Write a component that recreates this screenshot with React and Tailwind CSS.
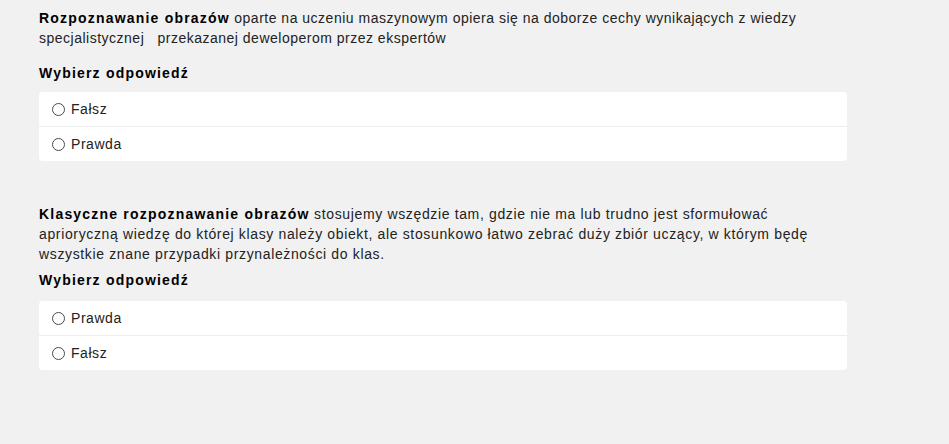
import React from "react";

function Radio() {
  return <span className="inline-block w-[13px] h-[13px] rounded-full border border-[#4a4a4a] bg-white shrink-0" />;
}

function Options({ items }) {
  return (
    <div className="w-[808px] bg-white rounded-[4px] flex flex-col">
      {items.map((t, i) => (
        <div
          key={t}
          className={
            "flex items-center gap-[6px] pl-[13px] " +
            (i > 0 ? "border-t border-[#eeeeee] h-[35px]" : "h-[34px]")
          }
        >
          <Radio />
          <span className="text-[#222] tracking-[0.55px]">{t}</span>
        </div>
      ))}
    </div>
  );
}

export default function App() {
  return (
    <div
      className="w-[949px] h-[444px] bg-[#f1f1f1] pl-[39px] pt-[8px] text-[14px] leading-[20px] text-[#222]"
      style={{ fontFamily: '"Liberation Sans", Arial, sans-serif' }}
    >
      <div className="w-[808px]">
        <p className="tracking-[0.5px]">
          <b className="text-black tracking-[1.2px]">Rozpoznawanie obrazów</b> oparte na uczeniu maszynowym opiera się na doborze cechy wynikających z wiedzy specjalistycznej&nbsp;&nbsp; przekazanej deweloperom przez ekspertów
        </p>
        <p className="mt-[15px] font-bold text-black tracking-[1.2px]">Wybierz odpowiedź</p>
        <div className="mt-[9px]">
          <Options items={["Fałsz", "Prawda"]} />
        </div>
        <p className="mt-[43px] tracking-[0.64px]">
          <b className="text-black tracking-[1.2px]">Klasyczne rozpoznawanie obrazów</b> stosujemy wszędzie tam, gdzie nie ma lub trudno jest sformułować
          <br />
          aprioryczną wiedzę do której klasy należy obiekt, ale stosunkowo łatwo zebrać duży zbiór uczący, w którym będę
          <br />
          wszystkie znane przypadki przynależności do klas.
        </p>
        <p className="mt-[6px] font-bold text-black tracking-[1.2px]">Wybierz odpowiedź</p>
        <div className="mt-[11px]">
          <Options items={["Prawda", "Fałsz"]} />
        </div>
      </div>
    </div>
  );
}
